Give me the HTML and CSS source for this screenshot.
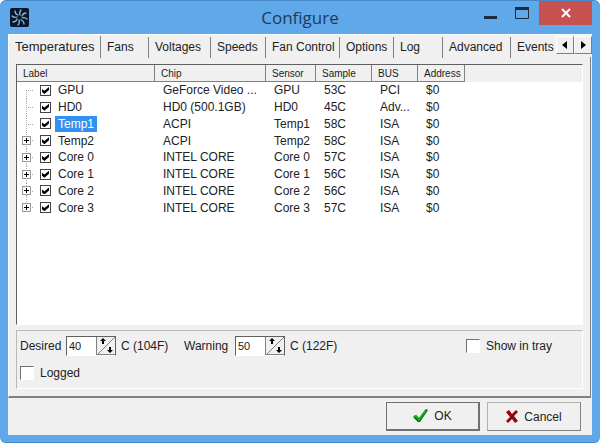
FILE: index.html
```html
<!DOCTYPE html>
<html lang="en">
<head>
    <meta charset="UTF-8">
    <meta name="viewport" content="width=device-width, initial-scale=1.0">
    <title>Configure</title>
    <link rel="stylesheet" href="styles.css">
</head>
<body>
    <div class="window">
        <header class="titlebar">
            <svg class="app-icon" viewBox="0 0 19 19" aria-hidden="true">
                <rect width="19" height="19" rx="2" fill="#07172d"/>
                <g fill="none" stroke="#8fb4cf" stroke-width="1.3" stroke-linecap="round">
                    <path d="M10 7Q9 4 11 2"/>
                    <path d="M12 8Q13 5 16 5"/>
                    <path d="M12 10Q15 9 17 11"/>
                    <path d="M11 12Q14 13 14 16"/>
                    <path d="M9 12Q10 15 8 17"/>
                    <path d="M7 11Q6 14 3 14"/>
                    <path d="M7 9Q4 10 2 8"/>
                    <path d="M8 7Q5 6 5 3"/>
                </g>
            </svg>
            <h1>Configure</h1>
            <div class="window-buttons">
                <button type="button" class="minimize" aria-label="Minimize">
                    <svg width="13" height="12" viewBox="0 0 13 12"><path d="M0 10.5h13" stroke="#1c2c3c" stroke-width="3"/></svg>
                </button>
                <button type="button" class="maximize" aria-label="Maximize">
                    <svg width="14" height="12" viewBox="0 0 14 12"><path d="M.5 1v10.500h13V1" fill="none" stroke="#1c2c3c"/><path d="M0 1.500h14" stroke="#1c2c3c" stroke-width="3"/></svg>
                </button>
                <button type="button" class="close" aria-label="Close">
                    <svg width="10" height="10" viewBox="0 0 10 10"><path d="M1 1l8 8M9 1L1 9" stroke="#fff" stroke-width="2"/></svg>
                </button>
            </div>
        </header>

        <main class="client">
            <nav class="tabs">
                <a href="#temperatures" class="active">Temperatures</a>
                <a href="#fans">Fans</a>
                <a href="#voltages">Voltages</a>
                <a href="#speeds">Speeds</a>
                <a href="#fan-control">Fan Control</a>
                <a href="#options">Options</a>
                <a href="#log">Log</a>
                <a href="#advanced">Advanced</a>
                <a href="#events">Events</a>
                <div class="tab-scroll">
                    <button type="button" aria-label="Previous tabs"><svg width="6" height="8" viewBox="0 0 6 8"><path d="M5 0v8L0 4z"/></svg></button>
                    <button type="button" aria-label="Next tabs"><svg width="6" height="8" viewBox="0 0 6 8"><path d="M1 0v8l5-4z"/></svg></button>
                </div>
            </nav>

            <section class="page" id="temperatures">
                <div class="list">
                    <table>
                        <colgroup>
                            <col class="col-label">
                            <col class="col-chip">
                            <col class="col-sensor">
                            <col class="col-sample">
                            <col class="col-bus">
                            <col class="col-address">
                            <col>
                        </colgroup>
                        <thead>
                            <tr>
                                <th>Label</th>
                                <th>Chip</th>
                                <th>Sensor</th>
                                <th>Sample</th>
                                <th>BUS</th>
                                <th>Address</th>
                                <td class="filler"></td>
                            </tr>
                        </thead>
                        <tbody>
                            <tr>
                                <td><div class="node"><span class="leaf"></span><input type="checkbox" id="gpu" checked><label for="gpu">GPU</label></div></td>
                                <td>GeForce Video ...</td>
                                <td>GPU</td>
                                <td>53C</td>
                                <td>PCI</td>
                                <td>$0</td>
                            </tr>
                            <tr>
                                <td><div class="node"><span class="leaf"></span><input type="checkbox" id="hd0" checked><label for="hd0">HD0</label></div></td>
                                <td>HD0 (500.1GB)</td>
                                <td>HD0</td>
                                <td>45C</td>
                                <td>Adv...</td>
                                <td>$0</td>
                            </tr>
                            <tr class="selected">
                                <td><div class="node"><span class="leaf"></span><input type="checkbox" id="temp1" checked><label for="temp1">Temp1</label></div></td>
                                <td>ACPI</td>
                                <td>Temp1</td>
                                <td>58C</td>
                                <td>ISA</td>
                                <td>$0</td>
                            </tr>
                            <tr>
                                <td><div class="node"><button type="button" class="expand" aria-label="Expand Temp2"></button><input type="checkbox" id="temp2" checked><label for="temp2">Temp2</label></div></td>
                                <td>ACPI</td>
                                <td>Temp2</td>
                                <td>58C</td>
                                <td>ISA</td>
                                <td>$0</td>
                            </tr>
                            <tr>
                                <td><div class="node"><button type="button" class="expand" aria-label="Expand Core 0"></button><input type="checkbox" id="core0" checked><label for="core0">Core 0</label></div></td>
                                <td>INTEL CORE</td>
                                <td>Core 0</td>
                                <td>57C</td>
                                <td>ISA</td>
                                <td>$0</td>
                            </tr>
                            <tr>
                                <td><div class="node"><button type="button" class="expand" aria-label="Expand Core 1"></button><input type="checkbox" id="core1" checked><label for="core1">Core 1</label></div></td>
                                <td>INTEL CORE</td>
                                <td>Core 1</td>
                                <td>56C</td>
                                <td>ISA</td>
                                <td>$0</td>
                            </tr>
                            <tr>
                                <td><div class="node"><button type="button" class="expand" aria-label="Expand Core 2"></button><input type="checkbox" id="core2" checked><label for="core2">Core 2</label></div></td>
                                <td>INTEL CORE</td>
                                <td>Core 2</td>
                                <td>56C</td>
                                <td>ISA</td>
                                <td>$0</td>
                            </tr>
                            <tr>
                                <td><div class="node"><button type="button" class="expand" aria-label="Expand Core 3"></button><input type="checkbox" id="core3" checked><label for="core3">Core 3</label></div></td>
                                <td>INTEL CORE</td>
                                <td>Core 3</td>
                                <td>57C</td>
                                <td>ISA</td>
                                <td>$0</td>
                            </tr>
                        </tbody>
                    </table>
                </div>

                <div class="settings">
                    <div class="settings-row">
                        <label for="desired">Desired</label>
                        <div class="spin">
                            <input type="text" id="desired" value="40">
                            <button type="button" aria-label="Change desired">
                                <svg width="17" height="17" viewBox="0 0 17 17"><path d="M0 17L17 0" stroke="#808080"/><path d="M5 1l3 3H6v3H4V4H2zM12 16l-3-3h2v-3h2v3h2z"/></svg>
                            </button>
                        </div>
                        <span class="unit">C (104F)</span>
                        <label for="warning" class="warning">Warning</label>
                        <div class="spin">
                            <input type="text" id="warning" value="50">
                            <button type="button" aria-label="Change warning">
                                <svg width="17" height="17" viewBox="0 0 17 17"><path d="M0 17L17 0" stroke="#808080"/><path d="M5 1l3 3H6v3H4V4H2zM12 16l-3-3h2v-3h2v3h2z"/></svg>
                            </button>
                        </div>
                        <span class="unit">C (122F)</span>
                        <div class="check tray">
                            <input type="checkbox" id="tray">
                            <label for="tray">Show in tray</label>
                        </div>
                    </div>
                    <div class="check">
                        <input type="checkbox" id="logged">
                        <label for="logged">Logged</label>
                    </div>
                </div>
            </section>

            <footer class="actions">
                <button type="submit" class="default">
                    <svg width="15" height="14" viewBox="0 0 15 14"><path d="M0 8l3-2 3 3 7-9 2 1-8 12H5z" fill="#0a5c12"/><path d="M1 8l2-1 3 4 7-10" fill="none" stroke="#12b01e" stroke-width="2"/></svg>
                    OK
                </button>
                <button type="button">
                    <svg width="12" height="13" viewBox="0 0 12 13"><path d="M0 2l3-2 3 4 4-4 2 2-4 4 4 5-3 2-3-4-4 4-2-2 4-4z" fill="#94040c"/></svg>
                    Cancel
                </button>
            </footer>
        </main>
    </div>
</body>
</html>
```

FILE: styles.css
```css
* {
    box-sizing: border-box;
}
body {
    margin: 0;
    background-color: #fff;
    color: #222;
    font-family: "Liberation Sans", Arial, sans-serif;
    font-size: 12px;
}
button {
    display: flex;
    justify-content: center;
    align-items: center;
    padding: 0;
    border: none;
    background-color: #f0f0f0;
    color: inherit;
    font: inherit;
}
.window {
    display: flex;
    flex-direction: column;
    min-height: 100vh;
    padding: 0 8px 7px;
    border: 1px solid #4788c6;
    border-width: 1px 0;
    border-radius: 6px;
    background-color: #5fa8ea;
}

/* Title bar */
.titlebar {
    display: grid;
    grid-template-columns: 120px 1fr 120px;
    height: 33px;
}
.app-icon {
    width: 19px;
    height: 19px;
    margin: 7px 2px;
}
h1 {
    margin: 0;
    color: #1b3c60;
    font-family: "Open Sans", sans-serif;
    font-size: 17px;
    font-weight: normal;
    line-height: 33px;
    text-align: center;
}
.window-buttons {
    display: flex;
    justify-content: flex-end;
    align-items: flex-start;
}
.window-buttons button {
    width: 31px;
    height: 24px;
    background-color: transparent;
}
.window-buttons .close {
    flex-shrink: 0;
    width: 53px;
    margin-left: 2px;
    background-color: #c75050;
}

/* Tabs */
.client {
    display: flex;
    flex: 1;
    flex-direction: column;
    background-color: #f0f0f0;
}
.tabs {
    display: grid;
    grid-template-columns: 92px 48px 62px 55px 74px 54px 49px 68px 1fr auto;
    height: 23px;
    border-top: 1px solid #fff;
    border-left: 1px solid #fff;
}
.tabs a {
    margin-top: 2px;
    padding-left: 6px;
    border-right: 1px solid #808080;
    color: inherit;
    line-height: 21px;
    text-decoration: none;
    white-space: nowrap;
}
.tabs a.active {
    margin-top: 1px;
    font-size: 13px;
}
.tabs a:nth-of-type(9) {
    border-right: none;
}
.tab-scroll {
    display: flex;
    margin-top: 1px;
}
.tab-scroll button {
    width: 18px;
    height: 18px;
    border: 1px solid #808080;
    border-top-color: #fff;
    border-left-color: #fff;
}
.page {
    display: flex;
    flex: 1;
    flex-direction: column;
    gap: 5px;
    margin-right: 1px;
    padding: 7px 7px;
    border-left: 1px solid #fff;
    border-right: 1px solid #808080;
    border-bottom: 2px solid #808080;
}

/* Sensor list */
.list {
    flex: 1;
    border: 1px solid #fff;
    border-top-color: #606060;
    border-left-color: #606060;
    background-color: #fff;
}
table {
    width: 100%;
    height: 151px;
    border-collapse: separate;
    border-spacing: 0;
    table-layout: fixed;
}
.col-label {
    width: 138px;
}
.col-chip {
    width: 111px;
}
.col-sensor {
    width: 50px;
}
.col-sample {
    width: 56px;
}
.col-bus {
    width: 46px;
}
.col-address {
    width: 47px;
}
thead tr {
    height: 17px;
}
th, .filler {
    padding: 1px 6px 0;
    background-color: #f0f0f0;
}
th {
    border-right: 1px solid #808080;
    border-bottom: 1px solid #808080;
    font-size: 10px;
    font-weight: normal;
    line-height: 15px;
    text-align: left;
}
tbody td {
    padding: 0 8px;
    line-height: 16px;
    white-space: nowrap;
}
tbody td:first-child {
    padding: 0;
    background-image:
        repeating-linear-gradient(to right, #aaa 0 1px, transparent 1px 2px),
        repeating-linear-gradient(#aaa 0 1px, transparent 1px 2px);
    background-position: 9px 8px, 9px 0;
    background-size: 8px 1px, 1px 100%;
    background-repeat: no-repeat;
}
tbody tr:first-child td:first-child {
    background-position: 9px 8px, 9px 8px;
}
tbody tr:last-child td:first-child {
    background-size: 8px 1px, 1px 8px;
}
.node {
    display: flex;
    align-items: center;
    padding-left: 5px;
}
.leaf, .expand {
    width: 9px;
    height: 9px;
    margin-right: 9px;
}
.expand {
    border: 1px solid #999;
    background:
        linear-gradient(#000, #000) center / 5px 1px no-repeat,
        linear-gradient(#000, #000) center / 1px 5px no-repeat,
        #fff;
}
.node label {
    margin-left: 4px;
    padding: 0 3px;
}
.selected label {
    background-color: #3390f0;
    color: #fff;
}
input[type="checkbox"] {
    appearance: none;
    flex-shrink: 0;
    width: 14px;
    height: 14px;
    margin: 0;
    border: 1px solid #fff;
    border-top-color: #707070;
    border-left-color: #707070;
    background-color: #fff;
}
.node input[type="checkbox"] {
    width: 11px;
    height: 11px;
    border-color: #444;
}
input[type="checkbox"]:checked::before {
    content: "";
    display: block;
    width: 7px;
    height: 7px;
    margin: 1px;
    background-color: #000;
    clip-path: polygon(0 29%, 35% 57%, 100% 0, 100% 43%, 35% 100%, 0 72%);
}

/* Settings under the list */
.settings {
    display: flex;
    flex-direction: column;
    gap: 10px;
    height: 59px;
    padding: 5px 4px 4px 3px;
    border: 1px solid #fff;
    border-top-color: #b8b8b8;
    border-left-color: #b8b8b8;
}
.settings-row, .check {
    display: flex;
    align-items: center;
}
.spin {
    display: flex;
    height: 20px;
    border: 1px solid #606060;
    border-bottom-color: #fff;
}
.spin input {
    width: 29px;
    padding: 0 2px;
    border: none;
    background-color: #fff;
    color: inherit;
    font: inherit;
    font-size: 11px;
}
.spin button {
    width: 19px;
    border: 1px solid #808080;
    border-top: none;
    border-right: none;
}
.settings-row > label {
    width: 46px;
}
.settings-row .warning {
    width: 51px;
}
.unit {
    width: 68px;
    padding-left: 5px;
}
.check {
    gap: 6px;
}
.tray {
    margin-left: auto;
    margin-right: 26px;
}

/* Dialog buttons */
.actions {
    display: flex;
    justify-content: flex-end;
    gap: 7px;
    padding: 4px 11px 4px 0;
}
.actions button {
    gap: 6px;
    width: 94px;
    height: 29px;
    border: 1px solid #808080;
    border-top-color: #b0b0b0;
    border-left-color: #b0b0b0;
}
.actions .default {
    border: 2px solid #707070;
    border-top-width: 1px;
    border-left-width: 1px;
}
```
